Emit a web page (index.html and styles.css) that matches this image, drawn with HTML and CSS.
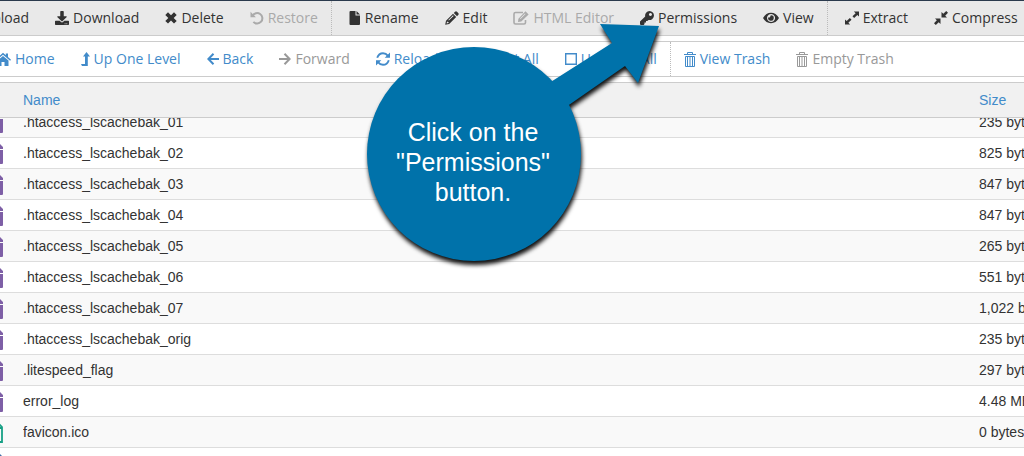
FILE: index.html
```
<!DOCTYPE html>
<html lang="en">

<head>
    <meta charset="UTF-8">
    <title>File Manager</title>
    <link rel="stylesheet" href="styles.css">
</head>

<body>

    <!-- icon set -->
    <svg class="sprite" aria-hidden="true">
        <symbol id="i-download" viewBox="0 0 512 512">
            <path d="M216 0h80c13.3 0 24 10.7 24 24v168h87.7c17.8 0 26.7 21.5 14.1 34.1L269.7 378.3c-7.5 7.5-19.8 7.5-27.3 0L90.1 226.1c-12.6-12.6-3.7-34.1 14.1-34.1H192V24c0-13.3 10.7-24 24-24zm296 376v112c0 13.3-10.7 24-24 24H24c-13.3 0-24-10.7-24-24V376c0-13.3 10.7-24 24-24h146.7l49 49c20.1 20.1 52.5 20.1 72.6 0l49-49H488c13.3 0 24 10.7 24 24zm-124 88c0-11-9-20-20-20s-20 9-20 20 9 20 20 20 20-9 20-20zm64 0c0-11-9-20-20-20s-20 9-20 20 9 20 20 20 20-9 20-20z" />
        </symbol>
        <symbol id="i-times" viewBox="0 0 12 14">
            <path d="M3 1.2l3 3 3-3L11.700 3.900l-3 3 3 3L9 12.600l-3-3-3 3L.3 9.900l3-3-3-3z" />
        </symbol>
        <symbol id="i-undo" viewBox="0 0 14 14">
            <path d="M2.600 4.800A5.200 5.200 0 1 1 3.400 10.900" fill="none" stroke="currentColor" stroke-width="2" />
            <path d="M.5.800v5.400h5.400z" />
        </symbol>
        <symbol id="i-file" viewBox="0 0 12 14">
            <path d="M.5 1q0-1 1-1H6.500v4.500H11V13q0 1-1 1H1.500q-1 0-1-1zM7.500 0L11 3.500H7.500z" />
        </symbol>
        <symbol id="i-pencil" viewBox="0 0 14 14">
            <path d="M10 .8q1-1 2 0l1.200 1.200q1 1 0 2L12 5.200 8.800 2zM8 2.800L11.200 6 4.200 13 .2 13.800 1 9.800zM2 10.500l-.4 1.900 1.900-.4.1-1-1.200-.2zM8 4.300L3.300 9l.6.6 4.700-4.700z" fill-rule="evenodd" />
        </symbol>
        <symbol id="i-edit" viewBox="0 0 16 14">
            <path d="M10 1.500H2.500Q1 1.500 1 3v8.500Q1 13 2.500 13H11q1.500 0 1.500-1.500V9" fill="none" stroke="currentColor" stroke-width="1.600" />
            <path d="M12.500.3L15.600 3.400 8.300 10.500l-3.300.5.4-3.300zM12 2.500L7 7.500l.5.500 5-5z" fill-rule="evenodd" />
        </symbol>
        <symbol id="i-key" viewBox="0 0 14 14">
            <path d="M9.500 0a4.500 4.500 0 1 1-1 8.900L7.300 10H6v1.500H4.500V13L3.700 14H.7L0 13.300v-2.700l5.200-5.200A4.500 4.500 0 0 1 9.500 0zm.9 2a1.500 1.500 0 1 0 .1 0z" fill-rule="evenodd" />
        </symbol>
        <symbol id="i-eye" viewBox="0 0 16 14">
            <path d="M0 7Q3 1.800 8 1.800T16 7q-3 5.200-8 5.200T0 7zm8-4a4 4 0 1 0 .1 0z" fill-rule="evenodd" />
            <path d="M8 4.200a2.800 2.800 0 1 1-2.700 2q1.700.8 2-.8 0-.8.700-1.200z" />
        </symbol>
        <symbol id="i-expand" viewBox="0 0 15 14">
            <path d="M9.500 0H15v5.500l-1.800-1.800L9.800 7 8 5.200l3.400-3.400zM0 8.500l1.800 1.800L5.200 7 7 8.800l-3.400 3.400L5.500 14H0z" />
        </symbol>
        <symbol id="i-compress" viewBox="0 0 14 14">
            <path d="M7.500 1l1.800 1.800L12.200 0 14 1.800l-2.800 2.900L13 6.500H7.500zM1 7.500h5.500V13l-1.800-1.800L1.800 14 0 12.200l2.800-2.900z" />
        </symbol>
        <symbol id="i-home" viewBox="0 0 16 14">
            <path d="M8 .8L10.800 3.200V1.500H13v3.600L16 7.700l-.9 1L8 2.700.9 8.700 0 7.700zM8 4l5.500 4.600V14H9.500v-4h-3v4h-4V8.600z" />
        </symbol>
        <symbol id="i-up" viewBox="0 0 9 14">
            <path d="M5.500 0L9 4.500H6.800V14H1L0 12h4V4.500H2z" />
        </symbol>
        <symbol id="i-left" viewBox="0 0 12 14">
            <path d="M6.500 1.800L1.400 7l5.100 5.200M1.500 7H12" fill="none" stroke="currentColor" stroke-width="2" />
        </symbol>
        <symbol id="i-right" viewBox="0 0 12 14">
            <path d="M5.500 1.800L10.600 7l-5.100 5.200M10.500 7H0" fill="none" stroke="currentColor" stroke-width="2" />
        </symbol>
        <symbol id="i-sync" viewBox="0 0 14 14">
            <path d="M1.200 5.800Q2.800 1.200 7 1.200q3 0 5 2.600M12.800 8.200Q11.200 12.800 7 12.800q-3 0-5-2.600" fill="none" stroke="currentColor" stroke-width="1.900" />
            <path d="M14 .5v5.300H8.700zM0 13.500V8.200h5.300z" />
        </symbol>
        <symbol id="i-check" viewBox="0 0 14 14">
            <path d="M1 1h12v12H1zM3.500 7L6 9.500 10.800 4.500" fill="none" stroke="currentColor" stroke-width="1.500" />
        </symbol>
        <symbol id="i-box" viewBox="0 0 12 14">
            <path d="M.7 1.700h10.600v10.600H.7z" fill="none" stroke="currentColor" stroke-width="1.400" />
        </symbol>
        <symbol id="i-trash" viewBox="0 0 12 15">
            <path d="M0 2.500h12M3.500 2.500v-2h5v2M1.500 4.500h9v10h-9zM3.500 5v9M6 5v9M8.500 5v9" fill="none" stroke="currentColor" />
        </symbol>
        <symbol id="i-doc" viewBox="0 0 16 21">
            <path d="M1 0h9v7h6v13q0 1-1 1H1q-1 0-1-1V1q0-1 1-1zM11 0h1l4 4v2h-5z" />
        </symbol>
        <symbol id="i-image" viewBox="0 0 16 21">
            <path d="M1 1h10l4 4v15H1zM10.500 1v5H15" fill="none" stroke="currentColor" stroke-width="1.800" />
        </symbol>
    </svg>

    <div class="toolbar actions">
        <button><svg class="w14"><use href="#i-download" /></svg>Upload</button>
        <button><svg class="w14"><use href="#i-download" /></svg>Download</button>
        <button><svg class="w12"><use href="#i-times" /></svg>Delete</button>
        <button disabled><svg class="w14"><use href="#i-undo" /></svg>Restore</button>
        <span class="sep"></span>
        <button><svg class="w12"><use href="#i-file" /></svg>Rename</button>
        <button><svg class="w14"><use href="#i-pencil" /></svg>Edit</button>
        <button disabled><svg class="w16"><use href="#i-edit" /></svg>HTML Editor</button>
        <button><svg class="w14"><use href="#i-key" /></svg>Permissions</button>
        <button><svg class="w16"><use href="#i-eye" /></svg>View</button>
        <span class="sep"></span>
        <button><svg class="w14"><use href="#i-expand" /></svg>Extract</button>
        <button><svg class="w14"><use href="#i-compress" /></svg>Compress</button>
    </div>

    <div class="toolbar nav">
        <button><svg class="w16"><use href="#i-home" /></svg>Home</button>
        <button><svg class="w9"><use href="#i-up" /></svg>Up One Level</button>
        <button><svg class="w12"><use href="#i-left" /></svg>Back</button>
        <button disabled><svg class="w12"><use href="#i-right" /></svg>Forward</button>
        <button><svg class="w14"><use href="#i-sync" /></svg>Reload</button>
        <button><svg class="w12"><use href="#i-check" /></svg>Select All</button>
        <button><svg class="w12"><use href="#i-box" /></svg>Unselect All</button>
        <span class="sep"></span>
        <button><svg class="w12 tall"><use href="#i-trash" /></svg>View Trash</button>
        <button disabled><svg class="w12 tall"><use href="#i-trash" /></svg>Empty Trash</button>
    </div>

    <table class="files head">
        <thead>
            <tr>
                <th class="type"></th>
                <th>Name</th>
                <th class="size">Size</th>
            </tr>
        </thead>
    </table>

    <div class="scroll">
        <table class="files body">
            <tbody>
                <tr>
                    <td class="type"><svg><use href="#i-doc" /></svg></td>
                    <td>.htaccess_lscachebak_01</td>
                    <td class="size">235 bytes</td>
                </tr>
                <tr>
                    <td class="type"><svg><use href="#i-doc" /></svg></td>
                    <td>.htaccess_lscachebak_02</td>
                    <td class="size">825 bytes</td>
                </tr>
                <tr>
                    <td class="type"><svg><use href="#i-doc" /></svg></td>
                    <td>.htaccess_lscachebak_03</td>
                    <td class="size">847 bytes</td>
                </tr>
                <tr>
                    <td class="type"><svg><use href="#i-doc" /></svg></td>
                    <td>.htaccess_lscachebak_04</td>
                    <td class="size">847 bytes</td>
                </tr>
                <tr>
                    <td class="type"><svg><use href="#i-doc" /></svg></td>
                    <td>.htaccess_lscachebak_05</td>
                    <td class="size">265 bytes</td>
                </tr>
                <tr>
                    <td class="type"><svg><use href="#i-doc" /></svg></td>
                    <td>.htaccess_lscachebak_06</td>
                    <td class="size">551 bytes</td>
                </tr>
                <tr>
                    <td class="type"><svg><use href="#i-doc" /></svg></td>
                    <td>.htaccess_lscachebak_07</td>
                    <td class="size">1,022 bytes</td>
                </tr>
                <tr>
                    <td class="type"><svg><use href="#i-doc" /></svg></td>
                    <td>.htaccess_lscachebak_orig</td>
                    <td class="size">235 bytes</td>
                </tr>
                <tr>
                    <td class="type"><svg><use href="#i-doc" /></svg></td>
                    <td>.litespeed_flag</td>
                    <td class="size">297 bytes</td>
                </tr>
                <tr>
                    <td class="type"><svg><use href="#i-doc" /></svg></td>
                    <td>error_log</td>
                    <td class="size">4.48 MB</td>
                </tr>
                <tr>
                    <td class="type image"><svg><use href="#i-image" /></svg></td>
                    <td>favicon.ico</td>
                    <td class="size">0 bytes</td>
                </tr>
                <tr>
                    <td class="type code"><svg><use href="#i-doc" /></svg></td>
                    <td></td>
                    <td class="size"></td>
                </tr>
            </tbody>
        </table>
    </div>

    <!-- tip pointing at the Permissions button -->
    <div class="callout">
        <svg viewBox="0 0 300 250" aria-hidden="true">
            <circle cx="108" cy="134" r="107" />
            <path d="M180 65L246 23 234 4 293 6 272 63 259 46 200 87z" />
        </svg>
        <p>Click on the "Permissions" button.</p>
    </div>

</body>

</html>
```

FILE: styles.css
```
* {
    box-sizing: border-box;
}

body {
    margin: 0;
    height: 100vh;
    display: flex;
    flex-direction: column;
    overflow: hidden;
    position: relative;
    background: #fff;
    color: #333;
    font-family: "Liberation Sans", Arial, sans-serif;
    font-size: 14px;
}

svg {
    fill: currentColor;
}

.sprite {
    display: none;
}

/* toolbars */
.toolbar {
    display: flex;
    flex: none;
    height: 36px;
    margin-bottom: 5px;
    border-top: 1px solid #ccc;
    border-bottom: 1px solid #ccc;
    overflow: hidden;
}

.toolbar button {
    display: flex;
    flex: none;
    align-items: center;
    gap: 4px;
    padding: 0 13px;
    border: 0;
    background: none;
    color: inherit;
    font-family: "Open Sans", sans-serif;
    font-size: 14px;
    line-height: 20px;
    white-space: nowrap;
}

.toolbar svg {
    height: 14px;
}

.toolbar svg.tall {
    height: 15px;
}

.toolbar .w9 {
    width: 9px;
}

.toolbar .w12 {
    width: 12px;
}

.toolbar .w14 {
    width: 14px;
}

.toolbar .w16 {
    width: 16px;
}

.sep {
    flex: none;
    border-left: 1px dotted #bbb;
}

.actions {
    border-top-color: #2a3a4d;
    background: #e9e9e9;
}

.actions .sep {
    margin-right: 4px;
}

.actions button:first-child {
    margin-left: -49px;
}

.actions button:disabled {
    color: #aaa;
}

.nav {
    color: #428bca;
}

.nav button:first-child {
    margin-left: -18px;
}

.nav button:disabled {
    color: #999;
}

/* file list */
.files {
    width: 100%;
    table-layout: fixed;
    border-collapse: separate;
    border-spacing: 0;
}

.files th,
.files td {
    height: 31px;
    padding: 0;
    text-align: left;
    white-space: nowrap;
    overflow: hidden;
}

.files .type {
    width: 23px;
}

.files .size {
    width: 45px;
}

.head {
    flex: none;
    border-top: 1px solid #ccc;
    border-bottom: 1px solid #ccc;
    background: #f1f1f1;
    color: #428bca;
}

.files th {
    height: 34px;
    font-weight: normal;
}

.scroll {
    flex: 1;
    min-height: 0;
    overflow: hidden;
}

.body {
    margin-top: -11px;
}

.body td {
    border-bottom: 1px solid #ddd;
}

.body tr:nth-child(odd) {
    background: #f9f9f9;
}

.type svg {
    display: block;
    width: 16px;
    height: 21px;
    margin-left: -13px;
    color: #7e5fa6;
}

.type.image svg {
    color: #17a085;
}

.type.code svg {
    color: #3f6fa8;
}

/* callout */
.callout {
    position: absolute;
    top: 20px;
    left: 366px;
    width: 300px;
    height: 250px;
    color: #0072aa;
}

.callout svg {
    display: block;
    width: 300px;
    height: 250px;
    overflow: visible;
    filter: drop-shadow(1px 4px 2px #111);
}

.callout p {
    position: absolute;
    top: 97px;
    left: 17px;
    width: 180px;
    margin: 0;
    color: #fff;
    font-size: 25px;
    line-height: 30px;
    text-align: center;
}
```
